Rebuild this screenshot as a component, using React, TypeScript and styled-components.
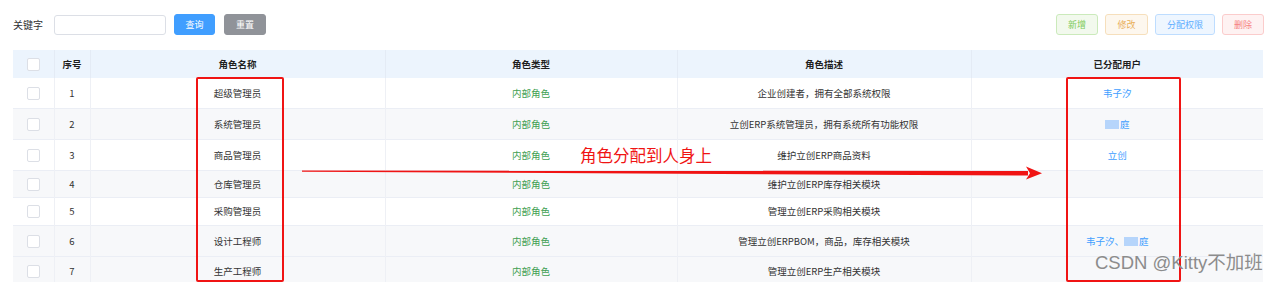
import styled, { createGlobalStyle } from "styled-components";

const GlobalStyle = createGlobalStyle`
  html, body {
    margin: 0;
    padding: 0;
    background: #ffffff;
  }
  body {
    font-family: "Noto Sans CJK SC", "Noto Sans", "Liberation Sans", sans-serif;
    color: #303133;
  }
`;

const Page = styled.div`
  position: relative;
  width: 1280px;
  height: 282px;
  overflow: hidden;
  padding: 14px 16px 0 13px;
  box-sizing: border-box;
`;

const Toolbar = styled.div`
  display: flex;
  align-items: center;
  justify-content: space-between;
  height: 21px;
`;

const ToolGroup = styled.div<{ $gap?: number; $offset?: number }>`
  display: flex;
  align-items: center;
  gap: ${(p) => p.$gap ?? 8}px;
  margin-left: ${(p) => p.$offset ?? 0}px;
`;

const Label = styled.span`
  font-size: 10px;
  color: #303133;
  margin-right: 11px;
`;

const Input = styled.div`
  width: 112px;
  height: 20px;
  border: 1px solid #dcdfe6;
  border-radius: 3px;
  box-sizing: border-box;
`;

type Tone = "primary" | "info" | "success" | "warning" | "plain" | "danger";

const tones: Record<Tone, { bg: string; fg: string; border: string }> = {
  primary: { bg: "#409eff", fg: "#ffffff", border: "#409eff" },
  info: { bg: "#909399", fg: "#ffffff", border: "#909399" },
  success: { bg: "#f0f9eb", fg: "#67c23a", border: "#c2e7b0" },
  warning: { bg: "#fdf6ec", fg: "#e6a23c", border: "#f5dab1" },
  plain: { bg: "#ecf5ff", fg: "#409eff", border: "#b3d8ff" },
  danger: { bg: "#fef0f0", fg: "#f56c6c", border: "#fbc4c4" },
};

const Button = styled.button<{ $tone: Tone; $w: number }>`
  width: ${(p) => p.$w}px;
  height: 21px;
  padding: 0;
  border-radius: 3px;
  font-family: inherit;
  font-size: 9px;
  line-height: 1;
  background: ${(p) => tones[p.$tone].bg};
  color: ${(p) => tones[p.$tone].fg};
  border: 1px solid ${(p) => tones[p.$tone].border};
  opacity: ${(p) => (p.$tone === "primary" || p.$tone === "info" ? 1 : 0.85)};
`;

const Table = styled.table`
  margin-top: 15px;
  width: 1250px;
  border-collapse: collapse;
  table-layout: fixed;
  font-size: 9.5px;
`;

const HeadCell = styled.th`
  height: 28px;
  padding: 0;
  background: #ecf4fd;
  font-weight: 700;
  color: #1f1f1f;
  text-align: center;
  border-right: 1px solid #e4ebf5;
  &:last-child {
    border-right: none;
  }
`;

const Row = styled.tr<{ $h: number; $stripe: boolean }>`
  height: ${(p) => p.$h}px;
  background: ${(p) => (p.$stripe ? "#f7f8fa" : "#ffffff")};
  border-bottom: 1px solid #ebeef5;
`;

const Cell = styled.td<{ $color?: string }>`
  padding: 0;
  text-align: center;
  color: ${(p) => p.$color ?? "#333333"};
  border-right: 1px solid #eef0f5;
  white-space: nowrap;
  &:last-child {
    border-right: none;
  }
`;

const Check = styled.span`
  display: inline-block;
  width: 11px;
  height: 11px;
  border: 1px solid #dcdfe6;
  border-radius: 2px;
  background: #fff;
  vertical-align: middle;
`;

const Blur = styled.span`
  display: inline-block;
  width: 14px;
  height: 9px;
  background: #b6d5fb;
  vertical-align: middle;
  margin-right: 1px;
`;

const Annotation = styled.div<{ $l: number; $t: number; $w: number; $h: number }>`
  position: absolute;
  left: ${(p) => p.$l}px;
  top: ${(p) => p.$t}px;
  width: ${(p) => p.$w}px;
  height: ${(p) => p.$h}px;
  border: 2px solid #f01414;
  border-radius: 2px;
  box-sizing: border-box;
  pointer-events: none;
`;

const Arrow = styled.svg`
  position: absolute;
  left: 300px;
  top: 164px;
`;

const Note = styled.div`
  position: absolute;
  left: 580px;
  top: 143px;
  font-size: 16.5px;
  color: #f01414;
  white-space: nowrap;
`;

const Watermark = styled.div`
  position: absolute;
  left: 1095px;
  top: 248px;
  font-size: 18.5px;
  color: #8c8c8c;
  font-family: "Liberation Sans", "Noto Sans CJK SC", sans-serif;
  white-space: nowrap;
`;

type RoleRow = { name: string; desc: string; users: React.ReactNode; h: number };

const rows: RoleRow[] = [
  { name: "超级管理员", desc: "企业创建者，拥有全部系统权限", users: "韦子汐", h: 30 },
  {
    name: "系统管理员",
    desc: "立创ERP系统管理员，拥有系统所有功能权限",
    users: (
      <>
        <Blur />庭
      </>
    ),
    h: 31,
  },
  { name: "商品管理员", desc: "维护立创ERP商品资料", users: "立创", h: 31 },
  { name: "仓库管理员", desc: "维护立创ERP库存相关模块", users: "", h: 27 },
  { name: "采购管理员", desc: "管理立创ERP采购相关模块", users: "", h: 28 },
  {
    name: "设计工程师",
    desc: "管理立创ERPBOM，商品，库存相关模块",
    users: (
      <>
        韦子汐、<Blur />庭
      </>
    ),
    h: 31,
  },
  { name: "生产工程师", desc: "管理立创ERP生产相关模块", users: "", h: 30 },
];

export default function App() {
  return (
    <>
      <GlobalStyle />
      <Page>
        <Toolbar>
          <ToolGroup $gap={0}>
            <Label>关键字</Label>
            <Input />
            <ToolGroup $gap={9} $offset={8}>
              <Button $tone="primary" $w={41}>查询</Button>
              <Button $tone="info" $w={42}>重置</Button>
            </ToolGroup>
          </ToolGroup>
          <ToolGroup $gap={7}>
            <Button $tone="success" $w={42}>新增</Button>
            <Button $tone="warning" $w={43}>修改</Button>
            <Button $tone="plain" $w={60}>分配权限</Button>
            <Button $tone="danger" $w={42}>删除</Button>
          </ToolGroup>
        </Toolbar>

        <Table>
          <colgroup>
            <col style={{ width: 41 }} />
            <col style={{ width: 36 }} />
            <col style={{ width: 295 }} />
            <col style={{ width: 292 }} />
            <col style={{ width: 294 }} />
            <col style={{ width: 292 }} />
          </colgroup>
          <thead>
            <tr>
              <HeadCell><Check /></HeadCell>
              <HeadCell>序号</HeadCell>
              <HeadCell>角色名称</HeadCell>
              <HeadCell>角色类型</HeadCell>
              <HeadCell>角色描述</HeadCell>
              <HeadCell>已分配用户</HeadCell>
            </tr>
          </thead>
          <tbody>
            {rows.map((r, i) => (
              <Row key={r.name} $h={r.h} $stripe={i % 2 === 1 || i === 6}>
                <Cell><Check /></Cell>
                <Cell>{i + 1}</Cell>
                <Cell>{r.name}</Cell>
                <Cell $color="#3f9f52">内部角色</Cell>
                <Cell>{r.desc}</Cell>
                <Cell $color="#409eff">{r.users}</Cell>
              </Row>
            ))}
          </tbody>
        </Table>

        <Annotation $l={196} $t={77} $w={88} $h={205} />
        <Annotation $l={1066} $t={77} $w={115} $h={205} />
        <Note>角色分配到人身上</Note>
        <Arrow width="745" height="18" viewBox="0 0 745 18">
          <polygon points="2,6.6 728,7 728,11.5 2,7.8" fill="#f01414" />
          <polygon points="726,2.5 742,9.3 726,15.5 730,9.3" fill="#f01414" />
        </Arrow>
        <Watermark>CSDN @Kitty不加班</Watermark>
      </Page>
    </>
  );
}
